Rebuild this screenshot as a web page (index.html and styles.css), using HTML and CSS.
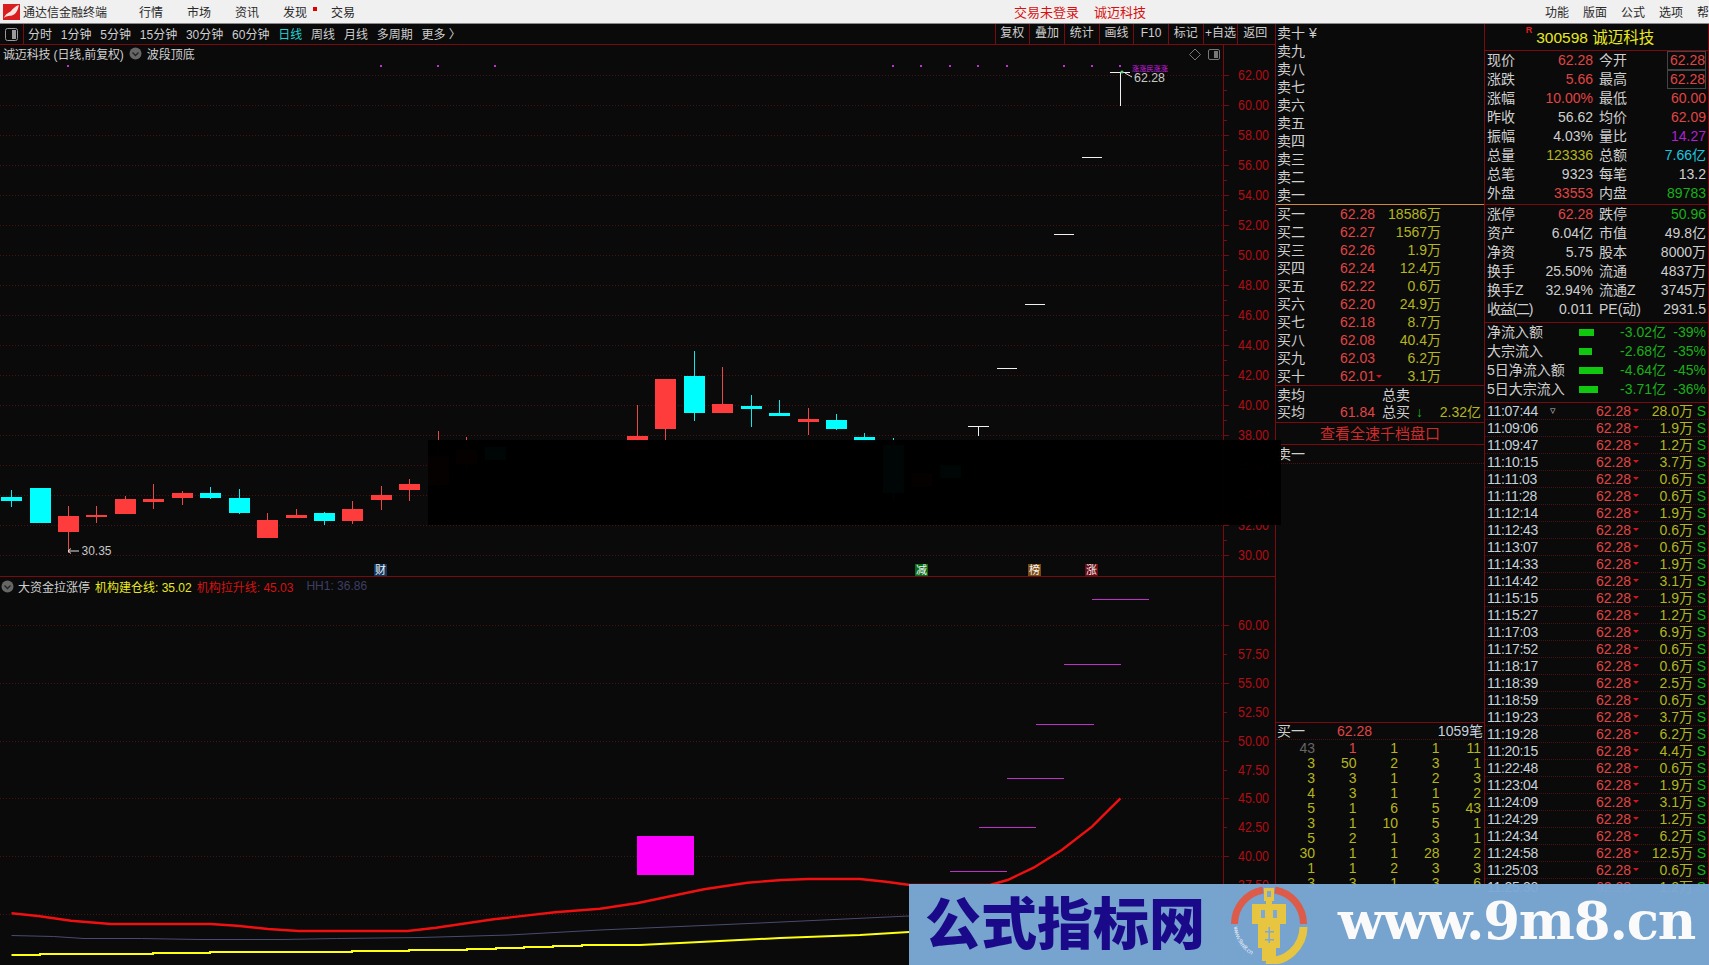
FILE: index.html
```html
<!DOCTYPE html>
<html lang="zh">
<head>
<meta charset="utf-8">
<title>通达信金融终端</title>
<link rel="stylesheet" href="styles.css">
</head>
<body>
<div class="app">
  <header class="titlebar">
    <div class="tb-left">
      <svg class="logo" width="17" height="16" viewBox="0 0 17 16"><rect width="17" height="16" fill="#d81e1e"/><path d="M1 14 C3 9 6 9 8 7 C10 5 12 2 16 1 C15 5 14 9 10 11 C7 12.5 4 11 1 14Z" fill="#f6e4e0"/></svg>
      <span class="appname">通达信金融终端</span>
      <nav class="nav"><span>行情</span><span>市场</span><span>资讯</span><span class="hasdot">发现</span><span>交易</span></nav>
    </div>
    <div class="tb-center"><span>交易未登录</span><span>诚迈科技</span></div>
    <div class="tb-right"><span>功能</span><span>版面</span><span>公式</span><span>选项</span><span>帮助</span></div>
  </header>

  <main class="main">
    <section class="chartcol">
      <div class="toolbar">
        <div class="tool-icon"><svg width="13" height="13" viewBox="0 0 13 13"><rect x=".5" y=".5" width="12" height="12" rx="2" fill="none" stroke="#9a9a9a"/><rect x="7" y="2" width="4" height="9" fill="#9a9a9a"/></svg></div>
        <div class="periods"><span>分时</span><span>1分钟</span><span>5分钟</span><span>15分钟</span><span>30分钟</span><span>60分钟</span><span class="on">日线</span><span>周线</span><span>月线</span><span>多周期</span><span>更多 〉</span></div>
        <div class="tools"><span>复权</span><span>叠加</span><span>统计</span><span>画线</span><span>F10</span><span>标记</span><span>+自选</span><span>返回</span></div>
      </div>
      <div class="chart">
        <svg class="plot" width="1275" height="920" viewBox="0 45 1275 920">
          <path class="grid" d="M0 75.5H1224M0 105.5H1224M0 135.5H1224M0 165.5H1224M0 195.5H1224M0 225.5H1224M0 255.5H1224M0 285.5H1224M0 315.5H1224M0 345.5H1224M0 375.5H1224M0 405.5H1224M0 435.5H1224M0 465.5H1224M0 495.5H1224M0 525.5H1224M0 555.5H1224M0 625.5H1224M0 683.5H1224M0 741.5H1224M0 798.5H1224M0 856.5H1224M0 914.5H1224"/>
          <path class="axis" d="M1223.5 45V965M0 576.5H1275"/>
          <path class="axis" d="M1224 75.5h5M1224 90.5h3M1224 105.5h5M1224 120.5h3M1224 135.5h5M1224 150.5h3M1224 165.5h5M1224 180.5h3M1224 195.5h5M1224 210.5h3M1224 225.5h5M1224 240.5h3M1224 255.5h5M1224 270.5h3M1224 285.5h5M1224 300.5h3M1224 315.5h5M1224 330.5h3M1224 345.5h5M1224 360.5h3M1224 375.5h5M1224 390.5h3M1224 405.5h5M1224 420.5h3M1224 435.5h5M1224 450.5h3M1224 465.5h5M1224 480.5h3M1224 495.5h5M1224 510.5h3M1224 525.5h5M1224 540.5h3M1224 555.5h5M1224 625.5h5M1224 654.5h3M1224 683.5h5M1224 712.5h3M1224 741.5h5M1224 770.5h3M1224 798.5h5M1224 827.5h3M1224 856.5h5M1224 885.5h3M1224 914.5h5"/>

          <g class="axt">
            <text x="1238" y="80" textLength="31" lengthAdjust="spacingAndGlyphs">62.00</text>
            <text x="1238" y="110" textLength="31" lengthAdjust="spacingAndGlyphs">60.00</text>
            <text x="1238" y="140" textLength="31" lengthAdjust="spacingAndGlyphs">58.00</text>
            <text x="1238" y="170" textLength="31" lengthAdjust="spacingAndGlyphs">56.00</text>
            <text x="1238" y="200" textLength="31" lengthAdjust="spacingAndGlyphs">54.00</text>
            <text x="1238" y="230" textLength="31" lengthAdjust="spacingAndGlyphs">52.00</text>
            <text x="1238" y="260" textLength="31" lengthAdjust="spacingAndGlyphs">50.00</text>
            <text x="1238" y="290" textLength="31" lengthAdjust="spacingAndGlyphs">48.00</text>
            <text x="1238" y="320" textLength="31" lengthAdjust="spacingAndGlyphs">46.00</text>
            <text x="1238" y="350" textLength="31" lengthAdjust="spacingAndGlyphs">44.00</text>
            <text x="1238" y="380" textLength="31" lengthAdjust="spacingAndGlyphs">42.00</text>
            <text x="1238" y="410" textLength="31" lengthAdjust="spacingAndGlyphs">40.00</text>
            <text x="1238" y="440" textLength="31" lengthAdjust="spacingAndGlyphs">38.00</text>
            <text x="1238" y="470" textLength="31" lengthAdjust="spacingAndGlyphs">36.00</text>
            <text x="1238" y="500" textLength="31" lengthAdjust="spacingAndGlyphs">34.00</text>
            <text x="1238" y="530" textLength="31" lengthAdjust="spacingAndGlyphs">32.00</text>
            <text x="1238" y="560" textLength="31" lengthAdjust="spacingAndGlyphs">30.00</text>
            <text x="1238" y="630" textLength="31" lengthAdjust="spacingAndGlyphs">60.00</text>
            <text x="1238" y="659" textLength="31" lengthAdjust="spacingAndGlyphs">57.50</text>
            <text x="1238" y="688" textLength="31" lengthAdjust="spacingAndGlyphs">55.00</text>
            <text x="1238" y="717" textLength="31" lengthAdjust="spacingAndGlyphs">52.50</text>
            <text x="1238" y="746" textLength="31" lengthAdjust="spacingAndGlyphs">50.00</text>
            <text x="1238" y="775" textLength="31" lengthAdjust="spacingAndGlyphs">47.50</text>
            <text x="1238" y="803" textLength="31" lengthAdjust="spacingAndGlyphs">45.00</text>
            <text x="1238" y="832" textLength="31" lengthAdjust="spacingAndGlyphs">42.50</text>
            <text x="1238" y="861" textLength="31" lengthAdjust="spacingAndGlyphs">40.00</text>
            <text x="1238" y="890" textLength="31" lengthAdjust="spacingAndGlyphs">37.50</text>
          </g>

          <path class="wick-c" d="M11.5 490V507M210.5 487V499M239.5 489V514M324.5 512V525M694.5 351V421M751.5 395V427M779.5 400V416M836.5 414V430M864.5 433V440M893.5 438V500"/>
          <path class="body-c" d="M1 497h21v4h-21zM29.5 488h21v35h-21zM200 493h21v5h-21zM229 498h21v15h-21zM314 513h21v8h-21zM684 376h21v37h-21zM741 406h21v3h-21zM769 413h21v3h-21zM826 420h21v9h-21zM854 437h21v6h-21zM484.5 447h21v13h-21zM882.5 445h21v48h-21zM939.5 465h21v13h-21z"/>
          <path class="wick-r" d="M68.5 506V553M96.5 506V523M125.5 496V514M153.5 484V509M182.5 491V505M267.5 513V520M296.5 509V518M352.5 501V524M381.5 486V510M409.5 479V501M438.5 431V490M466.5 437V470M637.5 405V440M665.5 429V445M722.5 367V413M808.5 408V435"/>
          <path class="body-r" d="M58 516h21v16h-21zM86 515h21v2h-21zM115 499h21v15h-21zM143 499h21v3h-21zM172 493h21v5h-21zM257 520h21v18h-21zM286 515h21v3h-21zM342 509h21v12h-21zM371 495h21v5h-21zM399 484h21v6h-21zM428 456h21v29h-21zM456 450h21v14h-21zM627 436h21v14h-21zM655 379h21v50h-21zM712 404h21v9h-21zM798 419h21v3h-21zM911 473h21v14h-21z"/>

          <path class="flat" d="M968 426.5h21M978.5 426V436M997 368.5h20M1025 304.5h20M1054 234.5h20M1082 157.5h20M1110 72.5h20M1120.5 72V106"/>
          <circle cx="1122" cy="72" r="1.6" fill="#5fd080"/>
          <path class="thin" d="M1125 73L1132 77M68 551H79M68 551l3-2.500M68 551l3 2.500"/>
          <text class="val" x="1134" y="82" textLength="31" lengthAdjust="spacingAndGlyphs">62.28</text>
          <text class="tiny" x="1132" y="71" textLength="36" lengthAdjust="spacingAndGlyphs">涨涨民涨涨</text>
          <text class="val" x="81.500" y="555" textLength="30" lengthAdjust="spacingAndGlyphs">30.35</text>

          <path class="dots" d="M67 65h2v2h-2zM380 65h2v2h-2zM437 65h2v2h-2zM494 65h2v2h-2zM892 65h2v2h-2zM920 65h2v2h-2zM949 65h2v2h-2zM977 65h2v2h-2zM1006 65h2v2h-2zM1063 65h2v2h-2zM1091 65h2v2h-2zM1119 65h2v2h-2z"/>

          <g class="small-tools">
            <path d="M1195 49L1200.500 54.500L1195 60L1189.500 54.500Z" fill="none" stroke="#777"/>
            <rect x="1208.500" y="49.500" width="11" height="10" rx="1.500" fill="none" stroke="#777"/>
            <rect x="1214" y="51" width="4" height="7" fill="#777"/>
          </g>

          <rect class="magenta" x="637" y="836" width="57" height="39"/>
          <path class="purple" d="M1092 599.500h57M1064 664.500h57M1036 724.500h58M1007 778.500h57M979 827.500h57M950 871.500h57"/>
          <polyline class="hh" points="11.500,935.500 53.600,936.500 84,938.500 141.600,938.500 199,939.500 283,939.500 336.800,938.500 421,937.500 509,935 600,930 760,923 909,916"/>
          <polyline class="yl" points="11.500,955 40,955 40,954 153,954 153,953 210,953 210,952 352,952 352,951 409,951 409,950 467,950 467,949 496,949 496,948 524,948 524,947 553,947 553,946 582,946 582,945 640,945 700,942 780,938 860,935 909,932"/>
          <polyline class="rl" points="11.500,913.300 38,916 71,920.700 111,924 210.500,924 237,925.700 268,929 298.500,931 407.600,931 436,927.700 493.700,919.300 555,912.300 600,908.700 638,903 704,889.300 747.400,882.700 782,880 808,879 860,879 886,881.700 910,885 990,885 1007.600,880 1033.600,867.700 1061.800,850 1092,826.700 1120.400,798.300"/>
        </svg>

        <div class="legend legend-top">
          <span class="tight-l">诚迈科技 (日线,前复权)</span>
          <svg class="chev" width="13" height="13" viewBox="0 0 13 13"><circle cx="6.500" cy="6.500" r="6" fill="#666"/><path d="M3.500 5.500L6.500 8.500L9.500 5.500" fill="none" stroke="#222" stroke-width="1.300"/></svg>
          <span>波段顶底</span>
        </div>
        <div class="legend legend-sub">
          <svg class="chev" width="13" height="13" viewBox="0 0 13 13"><circle cx="6.500" cy="6.500" r="6" fill="#666"/><path d="M3.500 5.500L6.500 8.500L9.500 5.500" fill="none" stroke="#222" stroke-width="1.300"/></svg>
          <span>大资金拉涨停</span>
          <span class="l-y">机构建仓线: 35.02</span>
          <span class="l-r">机构拉升线: 45.03</span>
          <span class="l-b">HH1: 36.86</span>
        </div>
        <span class="tag tag-cai">财</span>
        <span class="tag tag-jian">减</span>
        <span class="tag tag-bang">榜</span>
        <span class="tag tag-zhang">涨</span>
      </div>
    </section>

    <section class="book">
      <div class="levels">
        <div class="lv"><span>卖十 ¥</span></div>
        <div class="lv"><span>卖九</span></div>
        <div class="lv"><span>卖八</span></div>
        <div class="lv"><span>卖七</span></div>
        <div class="lv"><span>卖六</span></div>
        <div class="lv"><span>卖五</span></div>
        <div class="lv"><span>卖四</span></div>
        <div class="lv"><span>卖三</span></div>
        <div class="lv"><span>卖二</span></div>
        <div class="lv"><span>卖一</span></div>
      </div>
      <div class="levels buy">
        <div class="lv"><span>买一</span><span class="pr">62.28</span><span class="vl">18586万</span></div>
        <div class="lv"><span>买二</span><span class="pr">62.27</span><span class="vl">1567万</span></div>
        <div class="lv"><span>买三</span><span class="pr">62.26</span><span class="vl">1.9万</span></div>
        <div class="lv"><span>买四</span><span class="pr">62.24</span><span class="vl">12.4万</span></div>
        <div class="lv"><span>买五</span><span class="pr">62.22</span><span class="vl">0.6万</span></div>
        <div class="lv"><span>买六</span><span class="pr">62.20</span><span class="vl">24.9万</span></div>
        <div class="lv"><span>买七</span><span class="pr">62.18</span><span class="vl">8.7万</span></div>
        <div class="lv"><span>买八</span><span class="pr">62.08</span><span class="vl">40.4万</span></div>
        <div class="lv"><span>买九</span><span class="pr">62.03</span><span class="vl">6.2万</span></div>
        <div class="lv"><span>买十</span><span class="pr tri">62.01</span><span class="vl">3.1万</span></div>
      </div>
      <div class="avg">
        <div class="avg-row"><span>卖均</span><span class="pr"></span><span class="tot">总卖</span><span></span></div>
        <div class="avg-row"><span>买均</span><span class="pr">61.84</span><span class="tot">总买 <b class="down">↓</b></span><span class="vl">2.32亿</span></div>
      </div>
      <div class="bigbtn">查看全速千档盘口</div>
      <div class="sell1">卖一</div>
      <div class="book-space"></div>
      <div class="buy1"><span>买一</span><span class="pr">62.28</span><span class="cnt">1059笔</span></div>
      <div class="queue">
        <span class="g">43</span><span class="q-r">1</span><span>1</span><span>1</span><span>11</span>
        <span>3</span><span>50</span><span>2</span><span>3</span><span>1</span>
        <span>3</span><span>3</span><span>1</span><span>2</span><span>3</span>
        <span>4</span><span>3</span><span>1</span><span>1</span><span>2</span>
        <span>5</span><span>1</span><span>6</span><span>5</span><span>43</span>
        <span>3</span><span>1</span><span>10</span><span>5</span><span>1</span>
        <span>5</span><span>2</span><span>1</span><span>3</span><span>1</span>
        <span>30</span><span>1</span><span>1</span><span>28</span><span>2</span>
        <span>1</span><span>1</span><span>2</span><span>3</span><span>3</span>
        <span>3</span><span>3</span><span>1</span><span>3</span><span>6</span>
      </div>
    </section>

    <section class="quote">
      <div class="q-title"><sup>R</sup><span>300598 诚迈科技</span></div>
      <div class="q-block first">
        <div class="q"><span>现价</span><span class="up">62.28</span><span class="l2">今开</span><span class="up box">62.28</span></div>
        <div class="q"><span>涨跌</span><span class="up">5.66</span><span class="l2">最高</span><span class="up box">62.28</span></div>
        <div class="q"><span>涨幅</span><span class="up">10.00%</span><span class="l2">最低</span><span class="up">60.00</span></div>
        <div class="q"><span>昨收</span><span>56.62</span><span class="l2">均价</span><span class="up">62.09</span></div>
        <div class="q"><span>振幅</span><span>4.03%</span><span class="l2">量比</span><span class="pur">14.27</span></div>
        <div class="q"><span>总量</span><span class="yel">123336</span><span class="l2">总额</span><span class="cy">7.66亿</span></div>
        <div class="q"><span>总笔</span><span>9323</span><span class="l2">每笔</span><span>13.2</span></div>
        <div class="q"><span>外盘</span><span class="up">33553</span><span class="l2">内盘</span><span class="gr">89783</span></div>
      </div>
      <div class="q-block second">
        <div class="q"><span>涨停</span><span class="up">62.28</span><span class="l2">跌停</span><span class="gr">50.96</span></div>
        <div class="q"><span>资产</span><span>6.04亿</span><span class="l2">市值</span><span>49.8亿</span></div>
        <div class="q"><span>净资</span><span>5.75</span><span class="l2">股本</span><span>8000万</span></div>
        <div class="q"><span>换手</span><span>25.50%</span><span class="l2">流通</span><span>4837万</span></div>
        <div class="q"><span>换手Z</span><span>32.94%</span><span class="l2">流通Z</span><span>3745万</span></div>
        <div class="q"><span class="squeeze">收益(二)</span><span>0.011</span><span class="l2">PE(动)</span><span>2931.5</span></div>
      </div>
      <div class="q-block third">
        <div class="fl"><span>净流入额</span><i class="bar" style="width:15px"></i><span class="gr">-3.02亿</span><span class="gr">-39%</span></div>
        <div class="fl"><span>大宗流入</span><i class="bar" style="width:13px"></i><span class="gr">-2.68亿</span><span class="gr">-35%</span></div>
        <div class="fl"><span>5日净流入额</span><i class="bar" style="width:24px"></i><span class="gr">-4.64亿</span><span class="gr">-45%</span></div>
        <div class="fl"><span>5日大宗流入</span><i class="bar" style="width:19px"></i><span class="gr">-3.71亿</span><span class="gr">-36%</span></div>
      </div>
      <div class="ticks">
        <div class="t"><span class="tm">11:07:44<em class="flag">▿</em></span><span class="up">62.28</span><i></i><span class="yel">28.0万</span><span class="gr">S</span></div>
        <div class="t"><span class="tm">11:09:06</span><span class="up">62.28</span><i></i><span class="yel">1.9万</span><span class="gr">S</span></div>
        <div class="t"><span class="tm">11:09:47</span><span class="up">62.28</span><i></i><span class="yel">1.2万</span><span class="gr">S</span></div>
        <div class="t"><span class="tm">11:10:15</span><span class="up">62.28</span><i></i><span class="yel">3.7万</span><span class="gr">S</span></div>
        <div class="t"><span class="tm">11:11:03</span><span class="up">62.28</span><i></i><span class="yel">0.6万</span><span class="gr">S</span></div>
        <div class="t"><span class="tm">11:11:28</span><span class="up">62.28</span><i></i><span class="yel">0.6万</span><span class="gr">S</span></div>
        <div class="t"><span class="tm">11:12:14</span><span class="up">62.28</span><i></i><span class="yel">1.9万</span><span class="gr">S</span></div>
        <div class="t"><span class="tm">11:12:43</span><span class="up">62.28</span><i></i><span class="yel">0.6万</span><span class="gr">S</span></div>
        <div class="t"><span class="tm">11:13:07</span><span class="up">62.28</span><i></i><span class="yel">0.6万</span><span class="gr">S</span></div>
        <div class="t"><span class="tm">11:14:33</span><span class="up">62.28</span><i></i><span class="yel">1.9万</span><span class="gr">S</span></div>
        <div class="t"><span class="tm">11:14:42</span><span class="up">62.28</span><i></i><span class="yel">3.1万</span><span class="gr">S</span></div>
        <div class="t"><span class="tm">11:15:15</span><span class="up">62.28</span><i></i><span class="yel">1.9万</span><span class="gr">S</span></div>
        <div class="t"><span class="tm">11:15:27</span><span class="up">62.28</span><i></i><span class="yel">1.2万</span><span class="gr">S</span></div>
        <div class="t"><span class="tm">11:17:03</span><span class="up">62.28</span><i></i><span class="yel">6.9万</span><span class="gr">S</span></div>
        <div class="t"><span class="tm">11:17:52</span><span class="up">62.28</span><i></i><span class="yel">0.6万</span><span class="gr">S</span></div>
        <div class="t"><span class="tm">11:18:17</span><span class="up">62.28</span><i></i><span class="yel">0.6万</span><span class="gr">S</span></div>
        <div class="t"><span class="tm">11:18:39</span><span class="up">62.28</span><i></i><span class="yel">2.5万</span><span class="gr">S</span></div>
        <div class="t"><span class="tm">11:18:59</span><span class="up">62.28</span><i></i><span class="yel">0.6万</span><span class="gr">S</span></div>
        <div class="t"><span class="tm">11:19:23</span><span class="up">62.28</span><i></i><span class="yel">3.7万</span><span class="gr">S</span></div>
        <div class="t"><span class="tm">11:19:28</span><span class="up">62.28</span><i></i><span class="yel">6.2万</span><span class="gr">S</span></div>
        <div class="t"><span class="tm">11:20:15</span><span class="up">62.28</span><i></i><span class="yel">4.4万</span><span class="gr">S</span></div>
        <div class="t"><span class="tm">11:22:48</span><span class="up">62.28</span><i></i><span class="yel">0.6万</span><span class="gr">S</span></div>
        <div class="t"><span class="tm">11:23:04</span><span class="up">62.28</span><i></i><span class="yel">1.9万</span><span class="gr">S</span></div>
        <div class="t"><span class="tm">11:24:09</span><span class="up">62.28</span><i></i><span class="yel">3.1万</span><span class="gr">S</span></div>
        <div class="t"><span class="tm">11:24:29</span><span class="up">62.28</span><i></i><span class="yel">1.2万</span><span class="gr">S</span></div>
        <div class="t"><span class="tm">11:24:34</span><span class="up">62.28</span><i></i><span class="yel">6.2万</span><span class="gr">S</span></div>
        <div class="t"><span class="tm">11:24:58</span><span class="up">62.28</span><i></i><span class="yel">12.5万</span><span class="gr">S</span></div>
        <div class="t"><span class="tm">11:25:03</span><span class="up">62.28</span><i></i><span class="yel">0.6万</span><span class="gr">S</span></div>
        <div class="t"><span class="tm">11:25:30</span><span class="up">62.28</span><i></i><span class="yel">1.2万</span><span class="gr">S</span></div>
      </div>
    </section>

    <div class="blackout"></div>

    <aside class="watermark">
      <span class="wm-cn">公式指标网</span>
      <svg class="wm-logo" width="78" height="79" viewBox="0 0 78 79">
        <path d="M4.500 39A34.500 34.500 0 0 1 33 5" fill="none" stroke="#dd5b49" stroke-width="7"/>
        <path d="M45 5A34.500 34.500 0 0 1 73.500 39" fill="none" stroke="#dd5b49" stroke-width="7"/>
        <path d="M73.500 42A34.500 34.500 0 0 1 36 76" fill="none" stroke="#e8c540" stroke-width="8"/>
        <path d="M34 3h10v13h-2v3h14v20h-6v24h-4v13h-14v-13h-4v-24h-6v-20h14v-3h-2z" fill="#e8c540"/>
        <path d="M37 6h4v6h-4zM31 25h4v8h-4zM43 25h4v8h-4zM35 46h9v1.500h-9zM35 54h9v1.500h-9zM38.500 42h1.500v16h-1.500z" fill="#7ba8d6"/>
        <path id="wmarc" d="M4 42A35 35 0 0 0 33 74" fill="none"/>
        <text class="wm-arc"><textPath href="#wmarc">www.9m8.cn</textPath></text>
      </svg>
      <span class="wm-url">www.9m8.cn</span>
    </aside>
  </main>
</div>
</body>
</html>
```

FILE: styles.css
```css
* { box-sizing: border-box; }
html, body { margin: 0; padding: 0; background: #0a0a0a; }
body { width: 1709px; height: 965px; overflow: hidden; font-family: "Liberation Sans", "Noto Sans CJK SC", sans-serif; font-size: 14px; color: #cfcfcf; }
.app { width: 1709px; height: 965px; display: flex; flex-direction: column; }

/* title bar */
.titlebar { height: 24px; flex: none; background: #f0f0f0; border-bottom: 1px solid #8a8a8a; display: flex; align-items: center; font-size: 12px; color: #2a2a2a; overflow: hidden; white-space: nowrap; }
.tb-left { width: 1014px; flex: none; display: flex; align-items: center; padding-left: 3px; }
.logo { flex: none; margin-right: 3px; }
.appname { margin-right: 32px; }
.nav { display: flex; gap: 24px; }
.hasdot { position: relative; }
.hasdot::after { content: ""; position: absolute; left: 30px; top: 4px; width: 4px; height: 4px; background: #e00000; }
.tb-center { display: flex; gap: 15px; color: #d81010; font-size: 13px; flex: none; }
.tb-right { display: flex; gap: 14px; margin-left: 399px; flex: none; }

.main { position: relative; flex: 1; display: flex; min-height: 0; }

/* chart column */
.chartcol { width: 1275px; flex: none; display: flex; flex-direction: column; }
.toolbar { height: 21px; flex: none; display: flex; align-items: center; font-size: 12px; border-bottom: 1px solid #7a0a10; white-space: nowrap; }
.tool-icon { width: 24px; height: 100%; border-right: 1px solid #7a0a10; display: flex; align-items: center; justify-content: center; }
.periods { display: flex; gap: 8.800px; padding-left: 4px; margin-top: -2px; }
.periods .on { color: #22d3d3; }
.tools { margin-left: auto; margin-right: 3px; display: flex; height: 100%; }
.tools span { width: 34.700px; text-align: center; line-height: 18px; border-left: 1px solid #7a0a10; }
.chart { position: relative; flex: 1; min-height: 0; }
.plot { display: block; font-family: "Liberation Sans", "Noto Sans CJK SC", sans-serif; }

.grid { fill: none; stroke: #4a1015; stroke-width: 1; stroke-dasharray: 1 2; shape-rendering: crispEdges; }
.axis { fill: none; stroke: #7a0a10; stroke-width: 1; shape-rendering: crispEdges; }
.axt text { fill: #b00d15; font-size: 14px; }
.wick-c { fill: none; stroke: #12e6e6; shape-rendering: crispEdges; }
.body-c { fill: #00ffff; shape-rendering: crispEdges; }
.wick-r { fill: none; stroke: #e84848; shape-rendering: crispEdges; }
.body-r { fill: #ff3c3c; shape-rendering: crispEdges; }
.flat { fill: none; stroke: #f0f0f0; shape-rendering: crispEdges; }
.thin { fill: none; stroke: #e0e0e0; }
.val { fill: #c8c8c8; font-size: 13px; }
.tiny { fill: #d020e0; font-size: 7px; }
.dots { fill: #c030d0; }
.magenta { fill: #ff00ff; }
.purple { fill: none; stroke: #c030c8; shape-rendering: crispEdges; }
.hh { fill: none; stroke: #4a4a70; stroke-width: 1; }
.yl { fill: none; stroke: #ffff10; stroke-width: 2; }
.rl { fill: none; stroke: #f01010; stroke-width: 2.400; }

.legend { position: absolute; left: 3px; display: flex; align-items: center; font-size: 12px; color: #cfcfcf; white-space: nowrap; }
.legend-top { top: -1px; height: 18px; gap: 5px; }
.tight-l { letter-spacing: -0.150px; }
.legend-sub { top: 532px; left: 1px; height: 18px; gap: 5px; }
.legend-sub .chev { margin-right: -1px; }
.l-y { color: #e8e820; }
.l-r { color: #d81010; }
.l-b { color: #3e3e62; margin-left: 8px; }
.chev { flex: none; }
.tag { position: absolute; top: 519px; width: 13px; height: 12px; font-size: 11px; line-height: 12px; color: #f2f2f2; text-align: center; }
.tag-cai { left: 374px; background: #12355e; }
.tag-jian { left: 915px; background: #0a6a18; }
.tag-bang { left: 1028px; background: #7a4a12; }
.tag-zhang { left: 1085px; background: #6a0a12; }

/* order book */
.book { width: 209px; flex: none; display: flex; flex-direction: column; border-left: 1px solid #7a0a10; overflow: hidden; white-space: nowrap; }
.levels { border-bottom: 1px solid #d08a3a; }
.levels.buy { border-bottom: 1px solid #7a0a10; }
.lv { height: 18px; line-height: 18px; display: grid; grid-template-columns: 44px 54px 66px; padding-left: 1px; }
.pr { color: #e04545; text-align: right; }
.vl { color: #b5b51e; text-align: right; }
.tri { position: relative; }
.tri::after { content: ""; position: absolute; right: -7px; top: 8px; border: 3px solid transparent; border-top: 3px solid #e01020; }
.avg { padding-top: 1px; border-bottom: 1px solid #7a0a10; height: 37px; }
.avg-row { height: 17px; line-height: 17px; display: grid; grid-template-columns: 44px 54px 48px 58px; padding-left: 1px; }
.tot { padding-left: 7px; }
.down { color: #18b018; font-weight: bold; margin-left: 2px; }
.bigbtn { height: 22px; line-height: 21px; text-align: center; font-size: 15px; color: #d02a2a; border-bottom: 1px solid #7a0a10; }
.sell1 { height: 19px; line-height: 18px; padding-left: 1px; border-bottom: 1px dotted #4a1014; flex: none; }
.book-space { flex: 1; }
.buy1 { height: 18px; line-height: 16px; flex: none; display: grid; grid-template-columns: 60px 50px 1fr; padding: 0 1px; border-top: 1px solid #7a0a10; border-bottom: 1px dotted #4a1014; }
.buy1 .pr { text-align: left; }
.cnt { text-align: right; color: #c8d0d8; }
.queue { height: 225px; flex: none; display: grid; grid-template-columns: 39px 41.500px 41.500px 41.500px 41.500px; grid-auto-rows: 15px; line-height: 15px; text-align: right; color: #b5b51e; overflow: hidden; padding-top: 1px; }
.queue .g { color: #666; }
.queue .q-r { color: #e04545; }

/* quote column */
.quote { width: 225px; flex: none; display: flex; flex-direction: column; border-left: 1px solid #7a0a10; border-right: 1px solid #7a0a10; overflow: hidden; white-space: nowrap; }
.q-title { height: 27px; flex: none; padding: 0 13px 3px 0; display: flex; align-items: center; justify-content: center; gap: 4px; border-bottom: 1px solid #7a0a10; color: #e8e820; font-size: 15.500px; }
.q-title sup { font-size: 9px; color: #e02020; font-weight: bold; position: relative; top: -5px; line-height: 1; vertical-align: baseline; }
.q-block { flex: none; border-bottom: 1px solid #7a0a10; }
.q-block.first { padding-bottom: 1px; }
.q-block.second, .q-block.third { padding-bottom: 3px; }
.q { height: 19px; line-height: 19px; display: grid; grid-template-columns: 40px 66px 46px 67px; padding-left: 2px; }
.q > span:nth-child(2n) { text-align: right; }
.l2 { padding-left: 6px; }
.squeeze { letter-spacing: -1.200px; }
.box { outline: 1px solid #444; outline-offset: -1px; margin-left: 28px; padding-right: 1px; }
.up { color: #e04545; }
.yel { color: #b5b51e; }
.gr { color: #18b018; }
.cy { color: #18c8e0; }
.pur { color: #b020d0; }
.fl { height: 19px; line-height: 19px; display: grid; grid-template-columns: 92px 40px 47px 40px; padding-left: 2px; align-items: center; }
.fl > span:nth-of-type(n+2) { text-align: right; }
.bar { display: block; height: 7px; background: #10c810; }
.ticks { flex: 1; min-height: 0; overflow: hidden; }
.t { height: 17px; line-height: 16px; display: grid; grid-template-columns: 60px 84px 8px 54px 13px; padding-left: 2px; border-bottom: 1px dotted #4a1014; }
.t > span { text-align: right; }
.t > .tm { text-align: left; color: #c8d0d8; letter-spacing: -0.300px; position: relative; }
.flag { font-style: normal; position: absolute; left: 63px; top: -1px; font-size: 11px; color: #b8b8b8; }
.t > i { position: relative; }
.t > i::after { content: ""; position: absolute; left: 2px; top: 6px; border: 3px solid transparent; border-top: 3px solid #e01020; }

/* overlays */
.blackout { position: absolute; left: 428px; top: 416px; width: 853px; height: 85px; background: rgba(0, 0, 0, .975); }
.watermark { position: absolute; left: 909px; top: 860px; width: 800px; height: 81px; background: rgba(123, 168, 214, .97); display: flex; align-items: center; white-space: nowrap; }
.wm-cn { margin-left: 16px; width: 280px; flex: none; font-size: 56px; font-weight: 900; color: #1a0a8a; font-family: "Noto Sans CJK SC", sans-serif; line-height: 1; margin-bottom: 9px; }
.wm-logo { flex: none; margin-left: 25px; }
.wm-arc { font-size: 6px; fill: #f4f4f4; font-family: "Liberation Sans", sans-serif; }
.wm-url { margin-left: 30px; flex: none; font-family: "DejaVu Serif", serif; font-weight: bold; font-size: 53px; letter-spacing: -1.200px; color: #fafafa; line-height: 1; margin-bottom: 9px; }
```
